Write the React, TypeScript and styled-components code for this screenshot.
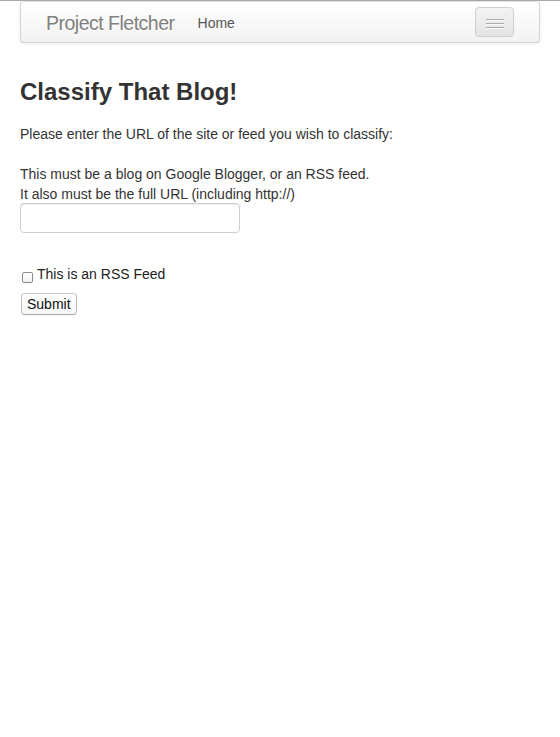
import React from "react";
import styled, { createGlobalStyle } from "styled-components";

const GlobalStyle = createGlobalStyle`
  html, body {
    margin: 0;
    padding: 0;
    background: #fff;
  }
  body {
    font-family: "Liberation Sans", Arial, Helvetica, sans-serif;
    font-size: 14px;
    line-height: 20px;
    color: #333;
  }
`;

const Page = styled.div`
  border-top: 1px solid #a9a9a9;
  min-height: 736px;
`;

const Navbar = styled.div`
  margin: 0 20px;
  height: 40px;
  display: flex;
  align-items: center;
  padding: 0 25px;
  background: linear-gradient(to bottom, #ffffff, #f2f2f2);
  border: 1px solid #d4d4d4;
  border-top-color: #e2e2e2;
  border-radius: 4px;
  box-shadow: 0 1px 4px rgba(0, 0, 0, 0.065);
`;

const Brand = styled.a`
  font-size: 19.5px;
  letter-spacing: -0.5px;
  font-weight: 300;
  color: #808080;
  text-shadow: 0 1px 0 #fff;
  text-decoration: none;
  line-height: 20px;
  margin-top: 2px;
`;

const NavLink = styled.a`
  margin-left: 23px;
  font-size: 14px;
  color: #555;
  text-shadow: 0 1px 0 #fff;
  text-decoration: none;
  margin-top: 1px;
`;

const Toggle = styled.button`
  margin-left: auto;
  margin-right: 0;
  width: 39px;
  height: 30px;
  padding: 11px 0 0;
  display: flex;
  flex-direction: column;
  align-items: center;
  gap: 3px;
  background: linear-gradient(to bottom, #f3f3f3, #e4e4e4);
  border: 1px solid #cfcfcf;
  border-radius: 4px;
  box-shadow: inset 0 1px 0 rgba(255, 255, 255, 0.2), 0 1px 0 rgba(255, 255, 255, 0.075);
  cursor: pointer;
`;

const Bar = styled.span`
  display: block;
  width: 18px;
  height: 1px;
  background: #acacac;
  box-shadow: 0 1px 0 #f7f7f7;
`;

const Content = styled.div`
  padding: 0 20px;
`;

const Title = styled.h1`
  margin: 34px 0 17px;
  font-size: 24px;
  line-height: 30px;
  font-weight: bold;
  color: #333;
`;

const Text = styled.p<{ $gap?: number }>`
  margin: 0 0 ${(p) => p.$gap ?? 0}px;
`;

const UrlInput = styled.input`
  display: block;
  box-sizing: border-box;
  width: 220px;
  height: 30px;
  margin: -1px 0 31px;
  padding: 4px 6px;
  font-family: inherit;
  font-size: 14px;
  color: #555;
  border: 1px solid #ccc;
  border-radius: 4px;
  box-shadow: inset 0 1px 1px rgba(0, 0, 0, 0.075);
  outline: none;
`;

const CheckRow = styled.label`
  display: flex;
  align-items: flex-start;
  height: 20px;
  margin-bottom: 9px;
  color: #222;
`;

const Check = styled.input`
  appearance: none;
  box-sizing: border-box;
  width: 11px;
  height: 11px;
  margin: 8px 4px 0 2px;
  border: 1px solid #8c8c8c;
  border-radius: 2px;
  background: linear-gradient(to bottom, #ffffff, #f1f1f1);
  box-shadow: 0 1px 0 rgba(0, 0, 0, 0.05);
`;

const SubmitButton = styled.button`
  margin-left: 1px;
  height: 22px;
  padding: 0 5px;
  font-family: "Liberation Sans", Arial, sans-serif;
  font-size: 14px;
  line-height: 20px;
  color: #111;
  background: linear-gradient(to bottom, #ffffff, #f6f6f6);
  border: 1px solid #bdbdbd;
  border-top-color: #c8c8c8;
  border-bottom-color: #a9a9a9;
  border-radius: 4px;
  box-shadow: 0 1px 0 rgba(0, 0, 0, 0.04);
  cursor: pointer;
`;

export default function App() {
  return (
    <Page>
      <GlobalStyle />
      <Navbar>
        <Brand href="#">Project Fletcher</Brand>
        <NavLink href="#">Home</NavLink>
        <Toggle aria-label="Toggle navigation">
          <Bar />
          <Bar />
          <Bar />
        </Toggle>
      </Navbar>
      <Content>
        <Title>Classify That Blog!</Title>
        <form onSubmit={(e) => e.preventDefault()}>
          <Text $gap={20}>Please enter the URL of the site or feed you wish to classify:</Text>
          <Text>This must be a blog on Google Blogger, or an RSS feed.</Text>
          <Text>It also must be the full URL (including http://)</Text>
          <UrlInput type="text" />
          <CheckRow>
            <Check type="checkbox" />
            This is an RSS Feed
          </CheckRow>
          <SubmitButton type="submit">Submit</SubmitButton>
        </form>
      </Content>
    </Page>
  );
}
